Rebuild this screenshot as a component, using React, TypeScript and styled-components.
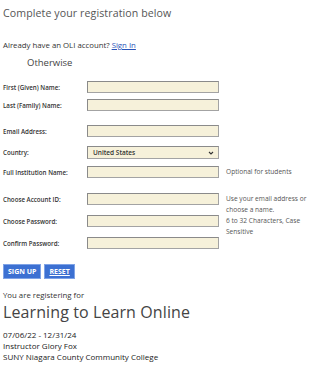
import React from "react";
import styled, { createGlobalStyle } from "styled-components";

const Global = createGlobalStyle`
  html, body { margin: 0; padding: 0; background: #fff; }
  body { font-family: "Open Sans", "Noto Sans", sans-serif; color: #333; }
  * { box-sizing: border-box; }
`;

const Page = styled.div`
  padding: 5px 3px 0 3px;
  width: 335px;
`;

const Title = styled.h2`
  margin: 0;
  font-size: 10.6px;
  font-weight: 400;
  color: #555;
  line-height: 16px;
  letter-spacing: 0.1px;
`;

const Account = styled.p`
  margin: 19px 0 0 0;
  font-size: 7.8px;
  line-height: 10px;
  color: #333;
`;

const SignIn = styled.a`
  color: #2a54b8;
  text-decoration: underline;
`;

const Otherwise = styled.div`
  margin: 7px 0 0 24px;
  font-size: 9.5px;
  line-height: 12px;
  color: #444;
`;

const Form = styled.div`
  display: grid;
  grid-template-columns: 77px 132px 1fr;
  column-gap: 7px;
  margin-top: 0;
`;

const Label = styled.label<{ $gap: number; $h?: number }>`
  font-size: 6.2px;
  font-weight: 600;
  color: #333;
  height: ${(p) => p.$h ?? 12}px;
  display: flex;
  align-items: center;
  margin-top: ${(p) => p.$gap}px;
`;

const Input = styled.input<{ $gap: number }>`
  height: 12px;
  width: 132px;
  margin: ${(p) => p.$gap}px 0 0 0;
  padding: 0;
  background: #f6f1da;
  border: 1px solid #a3a3a3;
  border-top-color: #8a8a8a;
  border-left-color: #8a8a8a;
  outline: none;
`;

const SelectBox = styled.div<{ $gap: number }>`
  height: 13px;
  width: 132px;
  margin-top: ${(p) => p.$gap}px;
  background: #f6f1da;
  border: 1px solid #a3a3a3;
  border-top-color: #8a8a8a;
  border-left-color: #8a8a8a;
  display: flex;
  align-items: center;
  justify-content: space-between;
  padding: 0 4px 0 5px;
  font-size: 6.5px;
  font-weight: 600;
  color: #333;
`;

const Hint = styled.div<{ $gap: number; $span?: number }>`
  font-size: 6.6px;
  line-height: 11px;
  color: #555;
  margin-top: ${(p) => p.$gap}px;
  grid-row: span ${(p) => p.$span ?? 1};
  align-self: start;
`;

const Buttons = styled.div`
  display: flex;
  gap: 3px;
  margin-top: 15px;
`;

const Button = styled.button<{ $underline?: boolean }>`
  background: #3c70d2;
  color: #fff;
  border: 1px solid #7fa3e6;
  font-family: inherit;
  font-size: 7px;
  font-weight: 700;
  height: 15px;
  padding: 0 4px;
  text-decoration: ${(p) => (p.$underline ? "underline" : "none")};
`;

const Registering = styled.p`
  margin: 11px 0 0 0;
  font-size: 7.8px;
  line-height: 10px;
  color: #333;
`;

const Course = styled.h1`
  margin: 2px 0 0 0;
  font-size: 16px;
  font-weight: 400;
  line-height: 20px;
  color: #444;
  letter-spacing: 0.1px;
`;

const Details = styled.div`
  margin-top: 7px;
  font-size: 8px;
  line-height: 11px;
  color: #222;
`;

const Chevron = () => (
  <svg width="6" height="4" viewBox="0 0 6 4">
    <path d="M1 1 L3 3 L5 1" fill="none" stroke="#333" strokeWidth="1.1" />
  </svg>
);

export default function App() {
  return (
    <>
      <Global />
      <Page>
        <Title>Complete your registration below</Title>
        <Account>
          Already have an OLI account? <SignIn href="#">Sign In</SignIn>
        </Account>
        <Otherwise>Otherwise</Otherwise>
        <Form>
          <Label $gap={12}>First (Given) Name:</Label>
          <Input $gap={12} />
          <span />
          <Label $gap={6}>Last (Family) Name:</Label>
          <Input $gap={6} />
          <span />
          <Label $gap={14}>Email Address:</Label>
          <Input $gap={14} />
          <span />
          <Label $gap={9} $h={13}>Country:</Label>
          <SelectBox $gap={9}>
            United States <Chevron />
          </SelectBox>
          <span />
          <Label $gap={7}>Full Institution Name:</Label>
          <Input $gap={7} />
          <Hint $gap={7}>Optional for students</Hint>
          <Label $gap={15}>Choose Account ID:</Label>
          <Input $gap={15} />
          <Hint $gap={15} $span={3}>
            Use your email address or
            <br />
            choose a name.
            <br />
            6 to 32 Characters, Case
            <br />
            Sensitive
          </Hint>
          <Label $gap={10}>Choose Password:</Label>
          <Input $gap={10} />
          <Label $gap={10}>Confirm Password:</Label>
          <Input $gap={10} />
        </Form>
        <Buttons>
          <Button>SIGN UP</Button>
          <Button $underline>RESET</Button>
        </Buttons>
        <Registering>You are registering for</Registering>
        <Course>Learning to Learn Online</Course>
        <Details>
          <div>07/06/22 - 12/31/24</div>
          <div>Instructor Glory Fox</div>
          <div>SUNY Niagara County Community College</div>
        </Details>
      </Page>
    </>
  );
}
